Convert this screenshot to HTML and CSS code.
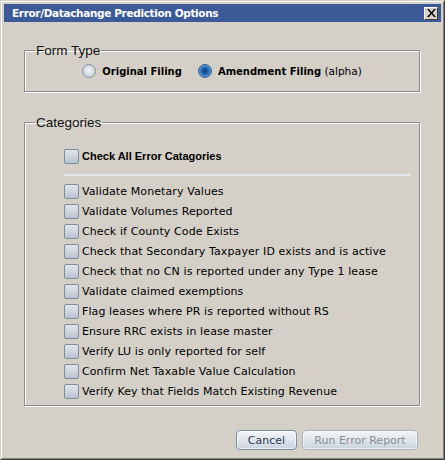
FILE: index.html
```html
<!DOCTYPE html>
<html>
<head>
<meta charset="utf-8">
<link rel="stylesheet" href="styles.css">
</head>
<body>
<div class="window">
  <div class="frame">
    <div class="titlebar">
      <span class="title">Error/Datachange Prediction Options</span>
      <span class="close"><svg width="9" height="8" viewBox="0 0 9 8"><path d="M0 0h2l2.5 3 2.5-3h2L5.5 4 9 8H7L4.5 5 2 8H0l3.5-4z" fill="#000"/></svg></span>
    </div>
    <div class="content">
      <fieldset class="group formtype">
        <legend>Form Type</legend>
        <div class="radios">
          <label class="radio"><span class="rbtn"></span><b>Original Filing</b></label>
          <label class="radio"><span class="rbtn on"></span><b>Amendment Filing</b>&nbsp;(alpha)</label>
        </div>
      </fieldset>
      <fieldset class="group cats">
        <legend>Categories</legend>
        <div class="list">
          <div class="row all"><span class="cb"></span><b>Check All Error Catagories</b></div>
          <div class="sep"></div>
          <div class="row"><span class="cb"></span>Validate Monetary Values</div>
          <div class="row"><span class="cb"></span>Validate Volumes Reported</div>
          <div class="row"><span class="cb"></span>Check if County Code Exists</div>
          <div class="row"><span class="cb"></span>Check that Secondary Taxpayer ID exists and is active</div>
          <div class="row"><span class="cb"></span>Check that no CN is reported under any Type 1 lease</div>
          <div class="row"><span class="cb"></span>Validate claimed exemptions</div>
          <div class="row"><span class="cb"></span>Flag leases where PR is reported without RS</div>
          <div class="row"><span class="cb"></span>Ensure RRC exists in lease master</div>
          <div class="row"><span class="cb"></span>Verify LU is only reported for self</div>
          <div class="row"><span class="cb"></span>Confirm Net Taxable Value Calculation</div>
          <div class="row"><span class="cb"></span>Verify Key that Fields Match Existing Revenue</div>
        </div>
      </fieldset>
      <div class="buttons">
        <button class="btn cancel">Cancel</button>
        <button class="btn disabled">Run Error Report</button>
      </div>
    </div>
  </div>
</div>
</body>
</html>
```

FILE: styles.css
```css
html, body {
  margin: 0;
  padding: 0;
  background: #d4d0c8;
}
.window {
  width: 445px;
  height: 460px;
  box-sizing: border-box;
  border: 1px solid;
  border-color: #d4d0c8 #404040 #404040 #d4d0c8;
  background: #d4d0c8;
}
.frame {
  height: 100%;
  box-sizing: border-box;
  border: 1px solid;
  border-color: #ffffff #808080 #808080 #ffffff;
  padding: 2px;
  display: flex;
  flex-direction: column;
}
.titlebar {
  height: 18px;
  background: #3d5a98;
  display: flex;
  align-items: center;
  justify-content: space-between;
  padding-left: 8px;
  padding-right: 3px;
}
.title {
  color: #fff;
  font-family: "DejaVu Sans", Verdana, sans-serif;
  font-weight: bold;
  font-size: 10.5px;
  letter-spacing: -0.35px;
}
.close {
  width: 14px;
  height: 13px;
  box-sizing: border-box;
  background: #d4d0c8;
  border: 1px solid;
  border-color: #fff #404040 #404040 #fff;
  display: flex;
  align-items: center;
  justify-content: center;
}
.content {
  flex: 1;
  display: flex;
  flex-direction: column;
  padding: 21px 21px 0 20px;
  font-family: "DejaVu Sans", Verdana, sans-serif;
  font-size: 11px;
  color: #000;
}
.group {
  margin: 0;
  border: 1px solid #8c8c8c;
  box-shadow: inset 1px 1px 0 #fff, 1px 1px 0 #fff;
  padding: 0;
}
.group legend {
  font-family: "Liberation Sans", Arial, sans-serif;
  font-size: 13.5px;
  line-height: 15px;
  padding: 0 1px;
  margin-left: 10px;
  color: #111;
}
.formtype {
  padding: 5px 0 12px;
}
.radios {
  display: flex;
  justify-content: center;
  gap: 16px;
}
.radio {
  display: flex;
  align-items: center;
  height: 16px;
  font-size: 10.5px;
}
.radio b {
  font-weight: bold;
  font-size: 10px;
}
.rbtn {
  width: 14px;
  height: 14px;
  border-radius: 50%;
  box-sizing: border-box;
  border: 1px solid #8896a8;
  background: radial-gradient(circle at 50% 45%, #f4f6f8 0, #dde2e8 40%, #b4bcc8 100%);
  margin-right: 6px;
}
.rbtn.on {
  border-color: #3a5f8e;
  background: radial-gradient(circle at 50% 50%, #0d3f7a 0, #1f5fa8 35%, #5d9ad6 70%, #a8ccef 100%);
}
.cats {
  margin-top: 23px;
}
.list {
  padding: 18px 8px 4px 39px;
}
.row {
  display: flex;
  align-items: center;
  height: 20px;
  white-space: nowrap;
  letter-spacing: 0.1px;
}
.row.all {
  height: 16px;
  letter-spacing: 0;
}
.row.all b {
  font-family: "Liberation Sans", Arial, sans-serif;
  font-size: 11px;
  font-weight: bold;
}
.cb {
  width: 15px;
  height: 15px;
  box-sizing: border-box;
  border: 1px solid #7c8ca0;
  border-radius: 2px;
  background: linear-gradient(#e2e6ec, #b8c2d0);
  margin-right: 3px;
  flex: none;
}
.sep {
  height: 2px;
  background: #e4e7ec;
  margin: 10px 0 5px;
}
.buttons {
  display: flex;
  justify-content: flex-end;
  gap: 5px;
  margin-top: 24px;
  padding-right: 2px;
}
.btn {
  height: 20px;
  padding: 0 10px;
  font-family: "DejaVu Sans", Verdana, sans-serif;
  font-size: 11px;
  color: #2c3c50;
  border: 1px solid #7d90a8;
  border-radius: 4px;
  background: linear-gradient(#f4f6f8, #dfe5ec 50%, #c9d3de);
  box-shadow: inset 0 0 0 1px rgba(255,255,255,0.6);
}
.btn.cancel {
  width: 61px;
}
.btn.disabled {
  color: #8a8e94;
  border-color: #a9b2bc;
  width: 116px;
}
```
